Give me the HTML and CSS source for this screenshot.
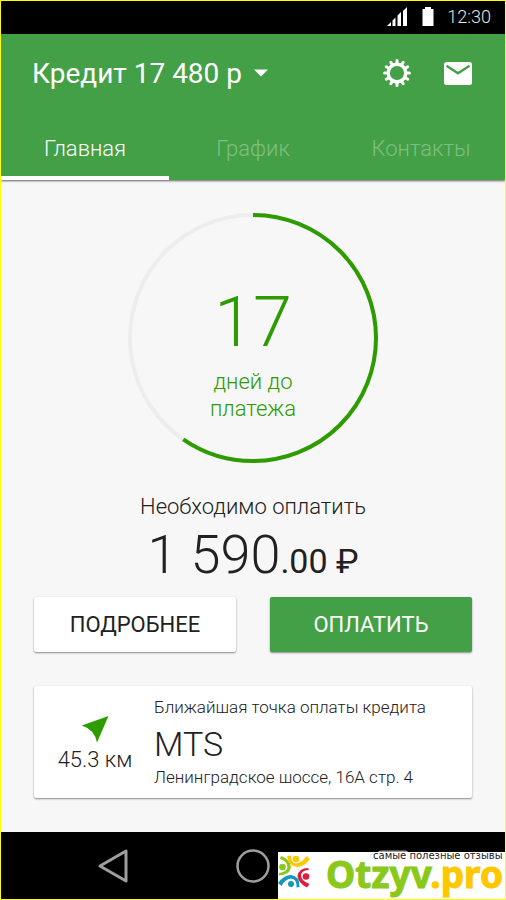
FILE: index.html
```html
<!DOCTYPE html>
<html lang="ru">
<head>
<meta charset="utf-8">
<meta name="viewport" content="width=device-width, initial-scale=1">
<title>Кредит</title>
<link rel="stylesheet" href="styles.css">
</head>
<body>
<div class="screen">
  <div class="status">
    <svg class="status-signal" width="22" height="20" viewBox="0 0 22 20" fill="#fff" aria-hidden="true">
      <path d="M1 19l4-4v4zM6.500 19v-5.500l3-3V19zM11.500 19V8.500l3.500-3.500v14zM17 19V4l4-4v19z"/>
    </svg>
    <svg class="status-battery" width="12" height="20" viewBox="0 0 12 20" fill="#fff" aria-hidden="true">
      <path d="M3 0h6v2h2.500v17H.500V2H3z"/>
    </svg>
    <span class="clock">12:30</span>
  </div>

  <header class="header">
    <div class="toolbar">
      <button class="account" type="button">Кредит 17 480 р
        <svg width="14" height="8" viewBox="0 0 14 8" fill="#fff" aria-hidden="true"><path d="M0 .500h14l-7 7z"/></svg>
      </button>
      <button class="icon-button" type="button" aria-label="Настройки">
        <svg width="28" height="28" viewBox="-14 -14 28 28" fill="none" stroke="#fff" aria-hidden="true">
          <circle r="8.800" stroke-width="3.400"/>
          <g stroke-width="3" stroke-linecap="round">
            <path id="tooth" d="M0-10v-2.400"/>
            <use href="#tooth" transform="rotate(30)"/><use href="#tooth" transform="rotate(60)"/>
            <use href="#tooth" transform="rotate(90)"/><use href="#tooth" transform="rotate(120)"/>
            <use href="#tooth" transform="rotate(150)"/><use href="#tooth" transform="rotate(180)"/>
            <use href="#tooth" transform="rotate(210)"/><use href="#tooth" transform="rotate(240)"/>
            <use href="#tooth" transform="rotate(270)"/><use href="#tooth" transform="rotate(300)"/>
            <use href="#tooth" transform="rotate(330)"/>
          </g>
        </svg>
      </button>
      <button class="icon-button" type="button" aria-label="Сообщения">
        <svg width="28" height="24" viewBox="0 0 28 24" aria-hidden="true">
          <rect y="1" width="28" height="23" rx="2.500" fill="#fff"/>
          <path d="M2.500 4.800L14 12.200 25.500 4.800" fill="none" stroke="#43a047" stroke-width="2.400"/>
        </svg>
      </button>
    </div>
    <nav class="tabs">
      <a class="tab tab-active" href="#main">Главная</a>
      <a class="tab" href="#schedule">График</a>
      <a class="tab" href="#contacts">Контакты</a>
    </nav>
  </header>

  <main class="content" id="main">
    <section class="ring">
      <svg class="ring-chart" width="250" height="250" viewBox="-125 -125 250 250" fill="none" stroke-width="4" aria-hidden="true">
        <circle r="123" stroke="#ededed"/>
        <circle r="123" stroke="#2e9b00" pathLength="1000" stroke-dasharray="596 404" transform="rotate(-90)"/>
      </svg>
      <div class="ring-label">
        <strong class="ring-days">17</strong>
        <span>дней до<br>платежа</span>
      </div>
    </section>

    <p class="due">Необходимо оплатить</p>
    <p class="amount">1 590<span class="amount-small">.00 ₽</span></p>

    <div class="actions">
      <button class="action" type="button">ПОДРОБНЕЕ</button>
      <button class="action action-primary" type="button">ОПЛАТИТЬ</button>
    </div>

    <section class="card">
      <div class="distance">
        <svg width="28" height="28" viewBox="0 0 28 28" fill="#2e9b00" aria-hidden="true"><path d="M27.500 1L16 27.500Q13.500 14.500 .800 10.500z"/></svg>
        <span>45.3 км</span>
      </div>
      <div class="place">
        <p class="place-note">Ближайшая точка оплаты кредита</p>
        <h2 class="place-name">MTS</h2>
        <p class="place-note">Ленинградское шоссе, 16А стр. 4</p>
      </div>
    </section>
  </main>

  <footer class="system">
    <button class="system-button" type="button" aria-label="Назад">
      <svg width="36" height="36" viewBox="0 0 36 36" fill="none" stroke="#9e9e9e" stroke-width="3" stroke-linejoin="round" aria-hidden="true"><path d="M31 3v30L5 18z"/></svg>
    </button>
    <button class="system-button" type="button" aria-label="Домой">
      <svg width="36" height="36" viewBox="0 0 36 36" fill="none" stroke="#9e9e9e" stroke-width="2.500" aria-hidden="true"><circle cx="18" cy="18" r="15.500"/></svg>
    </button>
    <button class="system-button" type="button" aria-label="Обзор">
      <svg width="36" height="36" viewBox="0 0 36 36" fill="none" stroke="#9e9e9e" stroke-width="3" aria-hidden="true"><rect x="4" y="4" width="28" height="28" rx="2"/></svg>
    </button>
  </footer>

  <aside class="badge">
    <svg class="badge-mark" width="32" height="34" viewBox="0 0 32 34" aria-hidden="true">
      <g>
        <path d="M3 1Q12 4 13 12Q12 20 1 20.500V18Q9 17 9.500 12Q9 6 2 4z" fill="#8ac91a"/>
        <path d="M9 1L13 .500Q13 8 18 8.500Q24 8 28.500 1L32 4Q26 12 19 12Q10 11 9 1z" fill="#fdc800"/>
        <path d="M31 15Q24 15 23 20Q23 26 31.500 29L29 32.500Q20 28 19.500 21Q21 13 30 13z" fill="#e21b3c"/>
        <path d="M0 28Q6 20 13 20Q22 21 21.500 32L18.500 32.500Q19 24 13 23.500Q7 24 3.500 31z" fill="#1496bd"/>
      </g>
      <circle cx="4.500" cy="12" r="3.300" fill="#8ac91a"/>
      <circle cx="18" cy="4" r="3.300" fill="#fdc800"/>
      <circle cx="28" cy="21.500" r="3.300" fill="#e21b3c"/>
      <circle cx="13" cy="29" r="3" fill="#1496bd"/>
    </svg>
    <div class="badge-words">
      <span class="badge-note">самые полезные отзывы</span>
      <span class="badge-name">Otzyv<span class="badge-zone">.pro</span></span>
    </div>
  </aside>
</div>
</body>
</html>
```
FILE: styles.css
```css
* {
  box-sizing: border-box;
}

body {
  margin: 0;
  font-family: Roboto, "Liberation Sans", sans-serif;
  font-weight: 300;
  font-size: 22px;
  color: #212121;
  background: #f7f7f7;
}

p, h2 {
  margin: 0;
  font-weight: 300;
}

button {
  padding: 0;
  border: 0;
  background: none;
  font: inherit;
  color: inherit;
}

svg {
  display: block;
}

.screen {
  position: relative;
  display: flex;
  flex-direction: column;
  min-height: 100vh;
  border: 1px solid #ff0;
  overflow: hidden;
}

.status {
  display: flex;
  justify-content: flex-end;
  align-items: center;
  height: 33px;
  padding: 0 14px 2px 0;
  background: #000;
  color: #e6e6e6;
}

.status-battery {
  margin: 0 13px 0 14px;
}

.clock {
  font-size: 18px;
}

.header {
  position: relative;
  background: #43a047;
  color: #fff;
  box-shadow: 0 1px 2px rgba(0, 0, 0, 0.6);
}

.toolbar {
  display: flex;
  align-items: center;
  gap: 33px;
  height: 78px;
  padding: 0 33px 0 31px;
}

.account {
  display: flex;
  align-items: center;
  gap: 12px;
  margin-right: auto;
  font-size: 28px;
  font-weight: 400;
  white-space: nowrap;
}

.tabs {
  display: grid;
  grid-template-columns: repeat(3, 1fr);
}

.tab {
  height: 68px;
  padding-top: 21px;
  border-bottom: 4px solid transparent;
  line-height: 32px;
  text-align: center;
  text-decoration: none;
  color: #80bf83;
}

.tab-active {
  border-bottom-color: #fff;
  color: #fff;
}

.content {
  flex: 1;
  padding: 33px 33px 34px;
}

.ring {
  display: grid;
  justify-items: center;
  color: #2e9b00;
}

.ring-chart,
.ring-label {
  grid-area: 1 / 1;
}

.ring-label {
  padding-top: 69px;
  line-height: 27px;
  text-align: center;
}

.ring-days {
  display: block;
  margin-bottom: 6px;
  font-size: 70px;
  line-height: 80px;
  font-weight: 300;
}

.due {
  margin-top: 30px;
  line-height: 28px;
  text-align: center;
}

.amount {
  font-size: 54px;
  line-height: 68px;
  text-align: center;
}

.amount-small {
  font-size: 34px;
  font-weight: 400;
}

.actions {
  display: grid;
  grid-template-columns: 1fr 1fr;
  gap: 34px;
  margin-top: 2px;
}

.action {
  height: 55px;
  border-radius: 2px;
  background: #fff;
  box-shadow: 0 1px 2px rgba(0, 0, 0, 0.45);
  font-size: 22px;
  font-weight: 400;
}

.action-primary {
  background: #43a047;
  color: #fff;
}

.card {
  display: flex;
  margin-top: 34px;
  padding: 10px 10px 10px 24px;
  border-radius: 2px;
  background: #fff;
  box-shadow: 0 1px 2px rgba(0, 0, 0, 0.45);
}

.distance {
  display: flex;
  flex-direction: column;
  align-items: center;
  gap: 4px;
  width: 96px;
  padding: 19px 22px 0 0;
  line-height: 26px;
  white-space: nowrap;
}

.place-note {
  font-size: 17px;
  line-height: 22px;
}

.place-name {
  padding-top: 4px;
  font-size: 34px;
  line-height: 44px;
}

.system {
  display: flex;
  justify-content: center;
  gap: 104px;
  height: 67px;
  background: #000;
}

.badge {
  position: absolute;
  right: 0;
  bottom: 0;
  display: flex;
  width: 227px;
  height: 47px;
  background: #fff;
}

.badge-mark {
  flex: none;
  margin-top: 3px;
}

.badge-words {
  display: flex;
  flex-direction: column;
  margin-left: 16px;
}

.badge-note {
  position: relative;
  z-index: 1;
  padding-left: 47px;
  font: 10px/8px "DejaVu Sans", sans-serif;
  white-space: nowrap;
}

.badge-name {
  font: 700 37px/28px "Noto Sans", sans-serif;
  -webkit-text-stroke: 1px currentColor;
  color: #8ac91a;
}

.badge-zone {
  color: #fdc800;
}
```
